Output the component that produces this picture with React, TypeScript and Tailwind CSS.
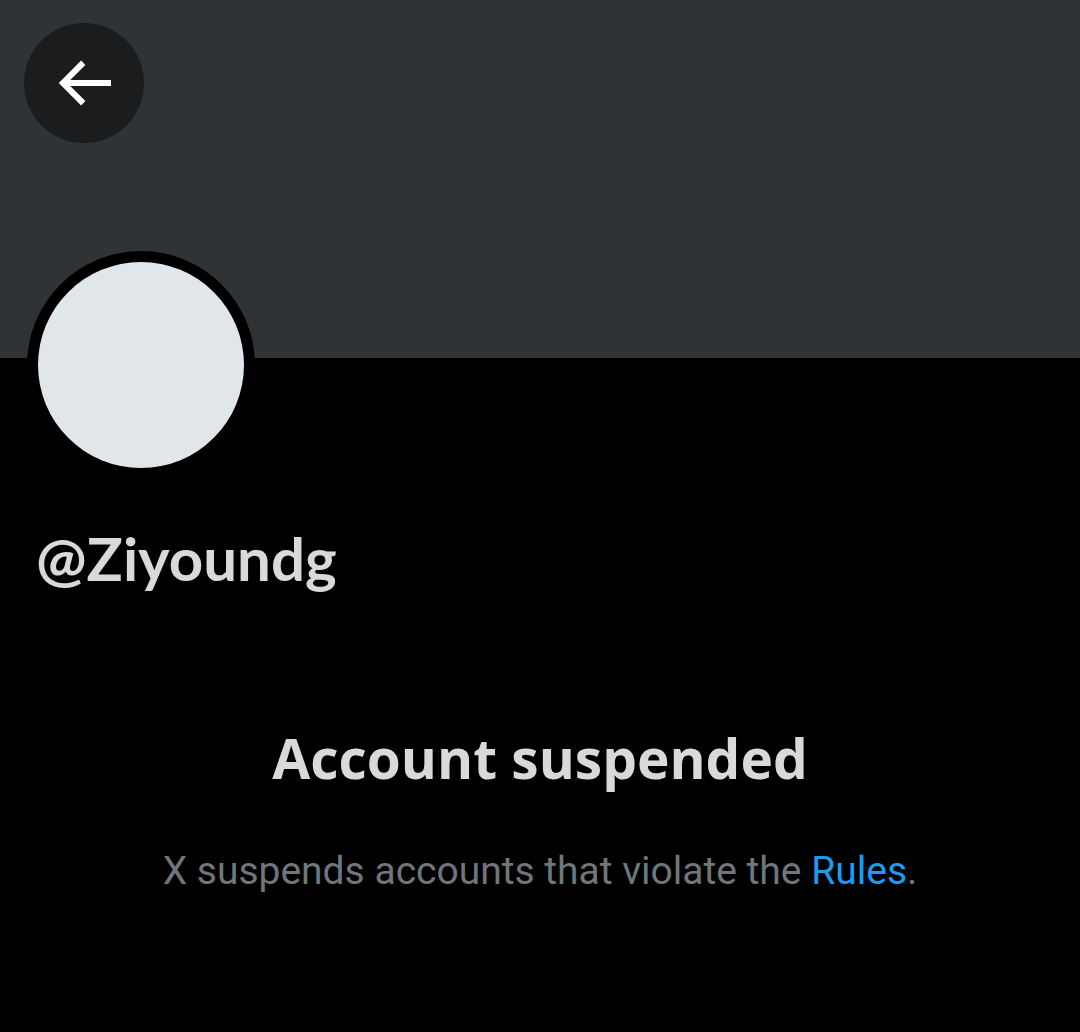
export default function App() {
  return (
    <div className="w-[1080px] h-[1032px] bg-black overflow-hidden">
      {/* banner */}
      <header className="h-[358px] bg-[#2f3336] pt-[23px] pl-[24px]">
        <button className="size-[120px] rounded-full bg-[#1a1c1e] flex items-center justify-center text-white">
          <svg viewBox="0 0 24 24" className="size-[72px]" fill="currentColor">
            <path d="M7.414 13l5.043 5.04-1.414 1.42L3.586 12l7.457-7.46 1.414 1.42L7.414 11H21v2H7.414z" />
          </svg>
        </button>
      </header>

      {/* avatar */}
      <div className="pl-[27px] -mt-[107px]">
        <div className="size-[228px] rounded-full bg-black p-[11px]">
          <div className="size-full rounded-full bg-[#e1e6ea]" />
        </div>
      </div>

      {/* handle */}
      <h1 className="mt-[49px] pl-[36px] text-[#d9d9d9] text-[60px] font-bold leading-none font-['Lato',sans-serif]">
        @Ziyoundg
      </h1>

      {/* suspended notice */}
      <section className="mt-[142px] flex flex-col items-center">
        <h2 className="text-[#d9d9d9] text-[55px] font-bold leading-none font-['Open_Sans',sans-serif]">
          Account suspended
        </h2>
        <p className="mt-[67px] text-[#71767b] text-[39px] leading-none font-['Roboto',sans-serif]">
          X suspends accounts that violate the{" "}
          <a className="text-[#1d9bf0]">Rules</a>.
        </p>
      </section>
    </div>
  );
}
